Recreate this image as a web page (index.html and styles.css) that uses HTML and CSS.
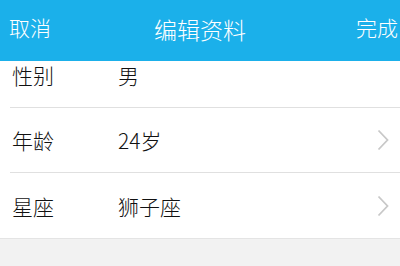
FILE: index.html
```html
<!DOCTYPE html>
<html lang="zh-CN">
<head>
  <meta charset="UTF-8">
  <meta name="viewport" content="width=device-width, initial-scale=1.0">
  <title>编辑资料</title>
  <link rel="stylesheet" href="styles.css">
</head>
<body>

  <div class="nav-bar">
    <span class="nav-btn">取消</span>
    <span class="nav-title">编辑资料</span>
    <span class="nav-btn nav-btn-right">完成</span>
  </div>

  <div class="info-list">
    <div class="info-row">
      <span class="info-label">性别</span>
      <span class="info-value">男</span>
    </div>
    <div class="info-row">
      <span class="info-label">年龄</span>
      <span class="info-value">24岁</span>
      <svg class="chevron" width="12" height="22" viewBox="0 0 12 22">
        <path d="M1.5 1.5 L10.5 11 L1.5 20.5" fill="none" stroke="#c8c8c8" stroke-width="1.8"/>
      </svg>
    </div>
    <div class="info-row">
      <span class="info-label">星座</span>
      <span class="info-value">狮子座</span>
      <svg class="chevron" width="12" height="22" viewBox="0 0 12 22">
        <path d="M1.5 1.5 L10.5 11 L1.5 20.5" fill="none" stroke="#c8c8c8" stroke-width="1.8"/>
      </svg>
    </div>
  </div>

</body>
</html>
```
FILE: styles.css
```css
* {
  box-sizing: border-box;
}

body {
  margin: 0;
  font-family: "Noto Sans CJK SC", "Liberation Sans", sans-serif;
  font-weight: 300;
  background-color: #f2f2f2;
  height: 100vh;
  overflow: hidden;
}

.nav-bar {
  position: relative;
  z-index: 1;
  height: 61px;
  display: flex;
  align-items: center;
  padding: 0 2px 8px 9px;
  background-color: #1bb0ea;
  color: #fff;
}

.nav-btn {
  flex: 1;
  font-size: 21px;
}

.nav-btn-right {
  text-align: right;
}

.nav-title {
  font-size: 23px;
  margin: 4px 7px 0 0;
}

.info-list {
  margin-top: -18px;
  background-color: #fff;
  border-bottom: 1px solid #e4e4e4;
}

.info-row {
  height: 65px;
  display: flex;
  align-items: center;
  margin-left: 10px;
  padding-right: 11px;
  border-bottom: 1px solid #e0e0e0;
  color: #111;
  font-size: 21px;
}

.info-row:last-child {
  border-bottom: none;
  margin-left: 0;
  padding-left: 10px;
}

.info-label {
  width: 108px;
  padding-left: 2px;
}

.info-value {
  flex: 1;
}

.chevron {
  flex-shrink: 0;
}
```
